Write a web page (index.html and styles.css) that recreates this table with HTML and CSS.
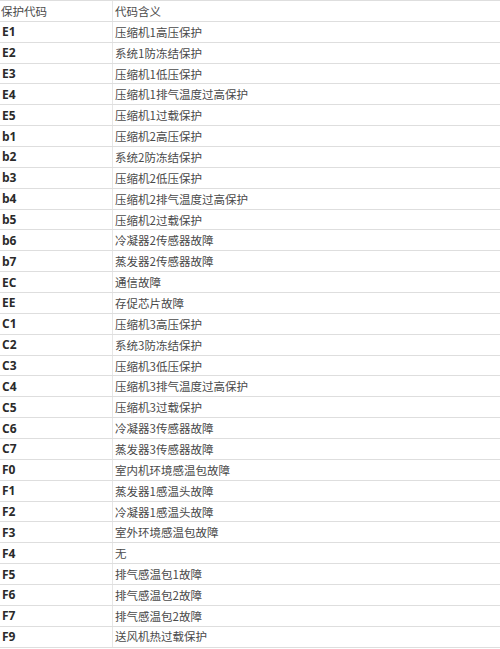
FILE: index.html
```html
<!DOCTYPE html>
<html lang="zh">
<head>
<meta charset="utf-8">
<title>保护代码</title>
<link rel="stylesheet" href="styles.css">
</head>
<body>
<div class="table">
  <div class="row head"><div class="code">保护代码</div><div class="desc">代码含义</div></div>
  <div class="row"><div class="code">E1</div><div class="desc">压缩机1高压保护</div></div>
  <div class="row"><div class="code">E2</div><div class="desc">系统1防冻结保护</div></div>
  <div class="row"><div class="code">E3</div><div class="desc">压缩机1低压保护</div></div>
  <div class="row"><div class="code">E4</div><div class="desc">压缩机1排气温度过高保护</div></div>
  <div class="row"><div class="code">E5</div><div class="desc">压缩机1过载保护</div></div>
  <div class="row"><div class="code">b1</div><div class="desc">压缩机2高压保护</div></div>
  <div class="row"><div class="code">b2</div><div class="desc">系统2防冻结保护</div></div>
  <div class="row"><div class="code">b3</div><div class="desc">压缩机2低压保护</div></div>
  <div class="row"><div class="code">b4</div><div class="desc">压缩机2排气温度过高保护</div></div>
  <div class="row"><div class="code">b5</div><div class="desc">压缩机2过载保护</div></div>
  <div class="row"><div class="code">b6</div><div class="desc">冷凝器2传感器故障</div></div>
  <div class="row"><div class="code">b7</div><div class="desc">蒸发器2传感器故障</div></div>
  <div class="row"><div class="code">EC</div><div class="desc">通信故障</div></div>
  <div class="row"><div class="code">EE</div><div class="desc">存促芯片故障</div></div>
  <div class="row"><div class="code">C1</div><div class="desc">压缩机3高压保护</div></div>
  <div class="row"><div class="code">C2</div><div class="desc">系统3防冻结保护</div></div>
  <div class="row"><div class="code">C3</div><div class="desc">压缩机3低压保护</div></div>
  <div class="row"><div class="code">C4</div><div class="desc">压缩机3排气温度过高保护</div></div>
  <div class="row"><div class="code">C5</div><div class="desc">压缩机3过载保护</div></div>
  <div class="row"><div class="code">C6</div><div class="desc">冷凝器3传感器故障</div></div>
  <div class="row"><div class="code">C7</div><div class="desc">蒸发器3传感器故障</div></div>
  <div class="row"><div class="code">F0</div><div class="desc">室内机环境感温包故障</div></div>
  <div class="row"><div class="code">F1</div><div class="desc">蒸发器1感温头故障</div></div>
  <div class="row"><div class="code">F2</div><div class="desc">冷凝器1感温头故障</div></div>
  <div class="row"><div class="code">F3</div><div class="desc">室外环境感温包故障</div></div>
  <div class="row"><div class="code">F4</div><div class="desc">无</div></div>
  <div class="row"><div class="code">F5</div><div class="desc">排气感温包1故障</div></div>
  <div class="row"><div class="code">F6</div><div class="desc">排气感温包2故障</div></div>
  <div class="row"><div class="code">F7</div><div class="desc">排气感温包2故障</div></div>
  <div class="row last"><div class="code">F9</div><div class="desc">送风机热过载保护</div></div>
</div>
</body>
</html>
```

FILE: styles.css
```css
html, body {
  margin: 0;
  padding: 0;
  background: #ffffff;
}

body {
  font-family: "Open Sans", "Noto Sans CJK SC", sans-serif;
  font-size: 12px;
  color: #3a3a3a;
}

.table {
  display: flex;
  flex-direction: column;
  width: 500px;
}

.row {
  display: flex;
  height: 20.87px;
  box-sizing: border-box;
  border-top: 1px solid #dedede;
}

.row.last {
  height: 22.3px;
  border-bottom: 1px solid #dedede;
}

.code {
  width: 113px;
  box-sizing: border-box;
  padding-left: 2px;
  border-right: 1px solid #e6e6e6;
  display: flex;
  align-items: center;
  font-weight: 700;
  color: #2a2a2a;
}

.desc {
  flex: 1;
  padding-left: 2px;
  display: flex;
  align-items: center;
  font-family: "Noto Sans CJK SC", sans-serif;
  font-size: 11.5px;
  color: #4a4a4a;
}

.head .code {
  font-weight: 400;
  font-family: "Noto Sans CJK SC", sans-serif;
  font-size: 11.5px;
  color: #4a4a4a;
  padding-left: 1px;
}

.row.last .code,
.row.last .desc {
  padding-bottom: 1.4px;
}
```
